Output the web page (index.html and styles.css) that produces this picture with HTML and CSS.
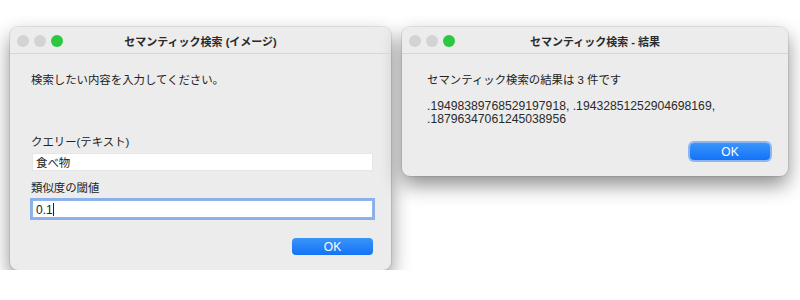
FILE: index.html
```html
<!DOCTYPE html>
<html lang="ja">
<head>
    <meta charset="UTF-8">
    <meta name="viewport" content="width=device-width, initial-scale=1.0">
    <title>セマンティック検索</title>
    <link rel="stylesheet" href="styles.css">
</head>
<body>
    <div class="window input-window">
        <div class="titlebar">
            <div class="lights">
                <span class="light"></span>
                <span class="light"></span>
                <span class="light green"></span>
            </div>
            <div class="title">セマンティック検索 (イメージ)</div>
        </div>
        <div class="content">
            <p class="prompt">検索したい内容を入力してください。</p>
            <label class="label first">クエリー(テキスト)</label>
            <div class="field">食べ物</div>
            <label class="label">類似度の閾値</label>
            <div class="field focused">0.1<span class="caret"></span></div>
            <div class="buttons">
                <button class="ok">OK</button>
            </div>
        </div>
    </div>

    <div class="window result-window">
        <div class="titlebar">
            <div class="lights">
                <span class="light"></span>
                <span class="light"></span>
                <span class="light green"></span>
            </div>
            <div class="title">セマンティック検索 - 結果</div>
        </div>
        <div class="content">
            <p class="prompt">セマンティック検索の結果は 3 件です</p>
            <p class="values">.19498389768529197918, .19432851252904698169, .18796347061245038956</p>
            <div class="buttons">
                <button class="ok default">OK</button>
            </div>
        </div>
    </div>
</body>
</html>
```

FILE: styles.css
```css
body {
    margin: 0;
    padding: 27px 0 0 10px;
    background: #ffffff;
    display: flex;
    align-items: flex-start;
    gap: 11px;
    font-family: "Liberation Sans", "Noto Sans CJK JP", sans-serif;
    font-size: 11.4px;
    color: #222222;
}
.window {
    background: #ececec;
    border-radius: 8px;
    box-shadow: 0 0 0 1px rgba(0, 0, 0, 0.08), 0 9px 20px rgba(0, 0, 0, 0.45);
    overflow: hidden;
}
.input-window {
    width: 381px;
    height: 243px;
}
.result-window {
    width: 386px;
    height: 149px;
}
.titlebar {
    position: relative;
    height: 26px;
    border-bottom: 1px solid #d6d6d6;
    display: flex;
    align-items: center;
    justify-content: center;
}
.lights {
    position: absolute;
    left: 7px;
    top: 8px;
    display: flex;
    gap: 5px;
}
.light {
    width: 12px;
    height: 12px;
    border-radius: 50%;
    background: #d3d3d3;
}
.light.green {
    background: #2bc940;
}
.title {
    font-weight: bold;
    font-size: 11px;
    color: #2a2a2a;
    padding-top: 2px;
}
.content {
    padding: 19px 18px 0 21px;
}
.result-window .content {
    padding-left: 25px;
}
.prompt {
    margin: 0;
    line-height: 14px;
}
.label {
    display: block;
    line-height: 14px;
    margin-top: 10px;
}
.label.first {
    margin-top: 48px;
}
.field {
    margin: 4px 0 0 1px;
    height: 18px;
    line-height: 18px;
    background: #ffffff;
    border: 1px solid #e6e6e6;
    box-sizing: border-box;
    padding-left: 3px;
}
.field.focused {
    margin-top: 5px;
    border-color: #8fb4ea;
    box-shadow: 0 0 0 2px #8ab0ea;
    font-size: 12px;
}
.caret {
    display: inline-block;
    width: 1px;
    height: 13px;
    background: #222;
    vertical-align: -2px;
}
.buttons {
    display: flex;
    justify-content: flex-end;
    margin-top: 20px;
}
.ok {
    width: 81px;
    height: 17px;
    border: none;
    border-radius: 4px;
    background: linear-gradient(#3b94fb, #1373f5);
    color: #ffffff;
    font-family: "Liberation Sans", sans-serif;
    font-size: 12px;
    padding: 0;
}
.values {
    margin: 13px 0 0;
    font-size: 12.2px;
    line-height: 13px;
    color: #2a2a2a;
}
.result-window .buttons {
    margin-top: 17px;
}
.ok.default {
    width: 80px;
    height: 17px;
    box-shadow: 0 0 0 2px rgba(110, 165, 245, 0.75);
}
```
